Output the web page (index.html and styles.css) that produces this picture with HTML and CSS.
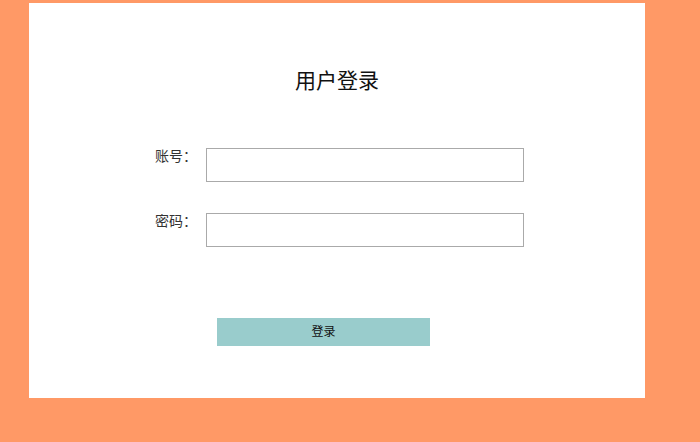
FILE: index.html
```html
<!DOCTYPE html>
<html lang="zh-CN">
<head>
    <meta charset="UTF-8">
    <title>用户登录</title>
    <link rel="stylesheet" href="styles.css">
</head>
<body>
    <div class="container">
        <h1>用户登录</h1>
        <div class="form-row">
            <label for="account">账号：</label>
            <input type="text" id="account">
        </div>
        <div class="form-row">
            <label for="password">密码：</label>
            <input type="password" id="password">
        </div>
        <button class="login-btn">登录</button>
    </div>
</body>
</html>
```
FILE: styles.css
```css
body {
    margin: 0;
    padding: 0;
    background-color: #ff9966;
    font-family: "Noto Sans CJK SC", "DejaVu Sans", sans-serif;
    height: 442px;
}

.container {
    width: 616px;
    height: 395px;
    margin: 3px 0 0 29px;
    background: white;
    padding-top: 62px;
    box-sizing: border-box;
}

h1 {
    margin: 0 0 55px 0;
    text-align: center;
    font-size: 21px;
    line-height: 28px;
    font-weight: normal;
    color: #111;
}

.form-row {
    display: flex;
    align-items: flex-start;
    padding-left: 126px;
    margin-bottom: 31px;
}

.form-row label {
    width: 51px;
    font-size: 14px;
    line-height: 16px;
    margin-top: -1px;
    color: #333;
}

.form-row input {
    width: 318px;
    height: 34px;
    box-sizing: border-box;
    border: 1px solid #aaa;
    margin: 0;
    padding: 0 4px;
    outline: none;
}

.login-btn {
    display: block;
    margin: 71px 0 0 188px;
    width: 213px;
    height: 28px;
    border: none;
    background-color: #99cccc;
    font-family: "Noto Sans CJK SC", sans-serif;
    font-size: 12px;
    line-height: 26px;
    color: #111;
    padding: 0 0 2px 0;
}
```
